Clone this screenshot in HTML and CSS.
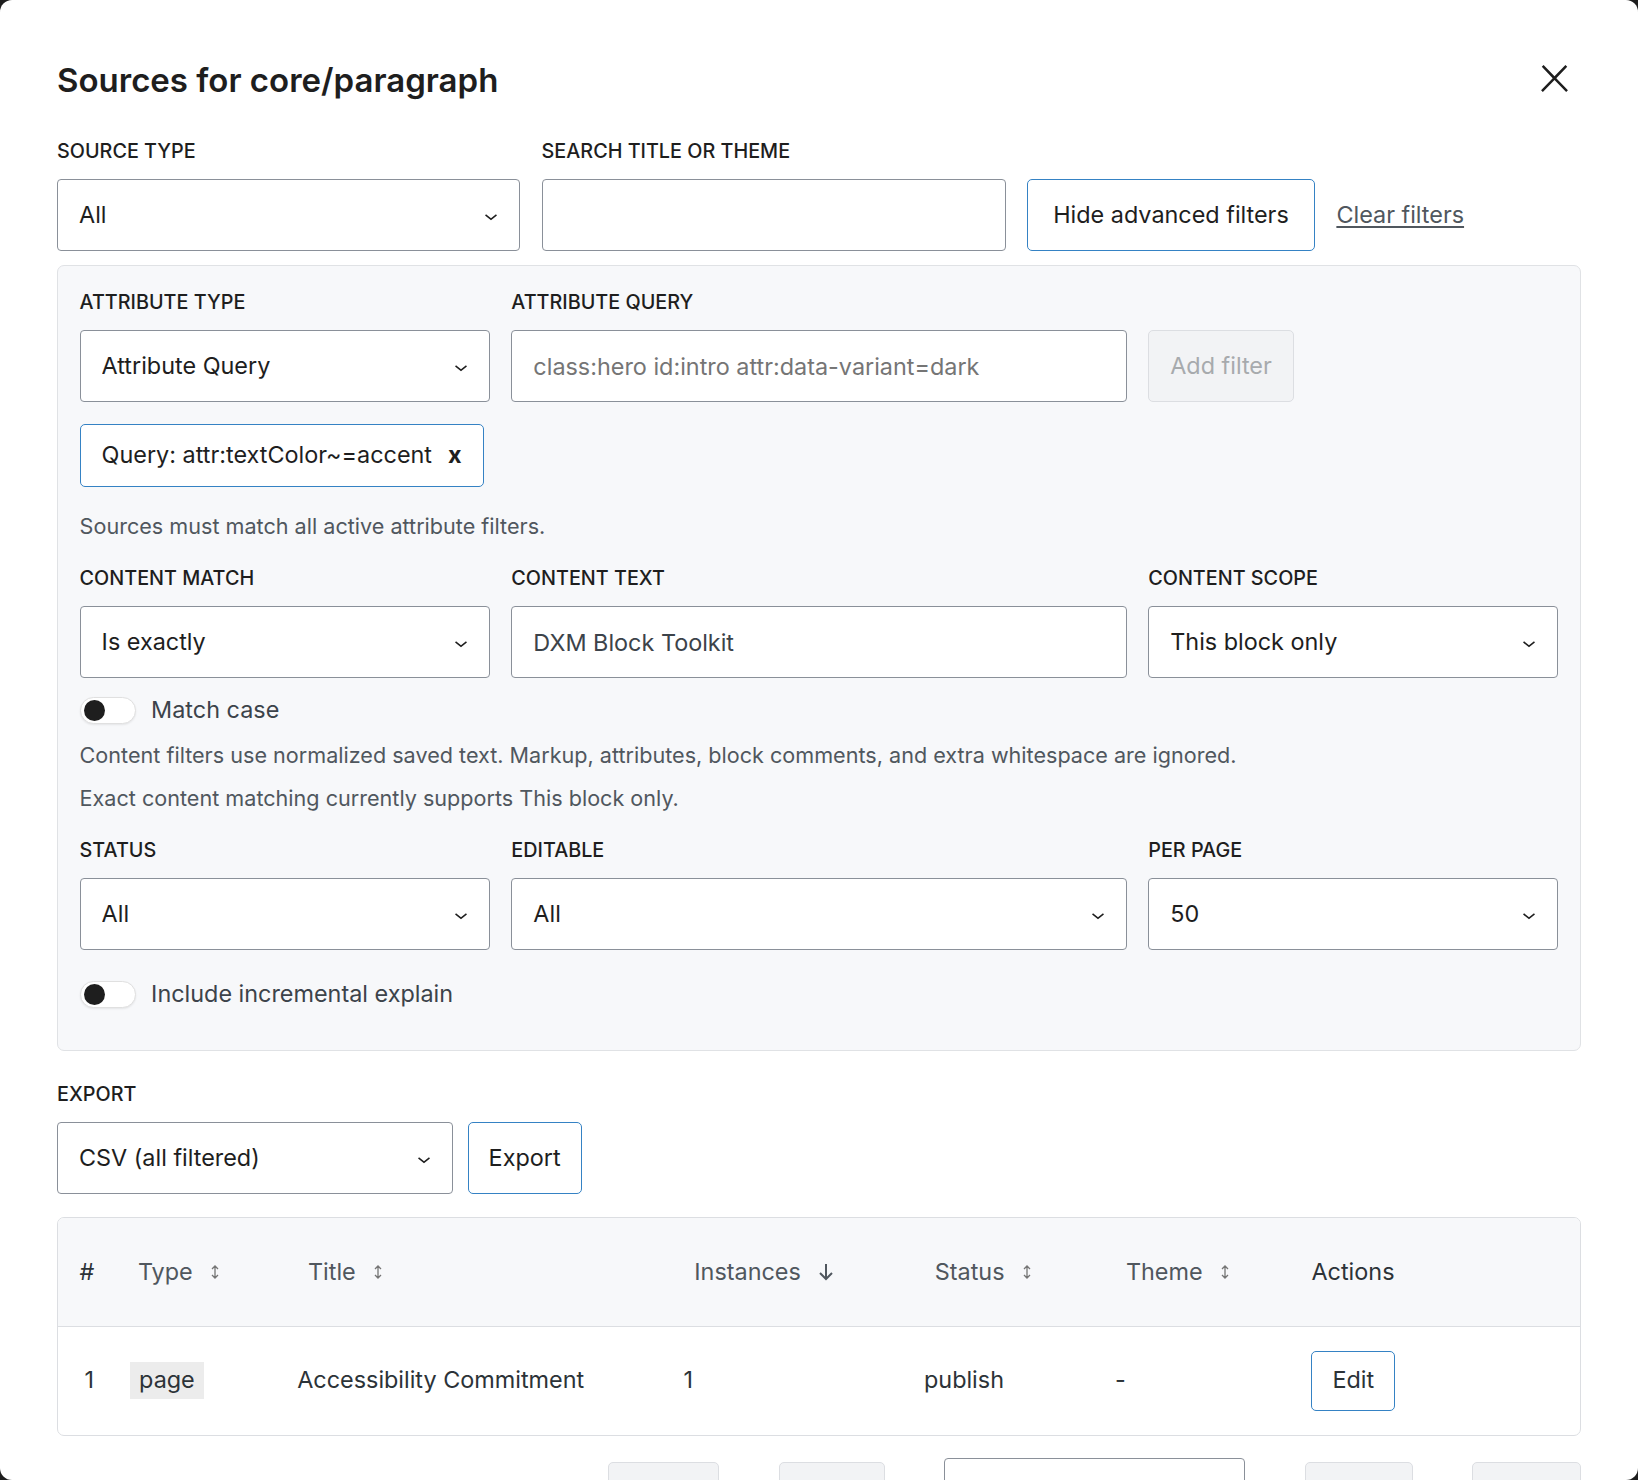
FILE: index.html
```html
<!DOCTYPE html>
<html lang="en">
<head>
    <meta charset="UTF-8">
    <meta name="viewport" content="width=device-width, initial-scale=1.0">
    <title>Sources for core/paragraph</title>
    <link rel="stylesheet" href="styles.css">
</head>
<body>
    <div class="modal">
        <div class="modal-header">
            <h1>Sources for core/paragraph</h1>
            <button class="close-button" aria-label="Close">
                <svg viewBox="0 0 24 24" width="43" height="43"><path d="M13 11.8l6.1-6.3-1-1-6.1 6.2-6.1-6.2-1 1 6.1 6.3-6.5 6.7 1 1 6.5-6.6 6.5 6.6 1-1z"/></svg>
            </button>
        </div>

        <div class="filter-row">
            <div class="field source-field">
                <label class="field-label">Source type</label>
                <div class="select-wrap">
                    <select class="control"><option>All</option></select>
                    <svg class="chevron" viewBox="0 0 24 24"><path d="M17.5 11.6L12 16l-5.5-4.4.9-1.2L12 14l4.6-3.6z"/></svg>
                </div>
            </div>
            <div class="field search-field">
                <label class="field-label">Search title or theme</label>
                <input type="text" class="control">
            </div>
            <button class="button button-toggle">Hide advanced filters</button>
            <a href="#" class="link">Clear filters</a>
        </div>

        <div class="advanced">
            <div class="grid3">
                <div class="field">
                    <label class="field-label">Attribute type</label>
                    <div class="select-wrap">
                        <select class="control"><option>Attribute Query</option></select>
                        <svg class="chevron" viewBox="0 0 24 24"><path d="M17.5 11.6L12 16l-5.5-4.4.9-1.2L12 14l4.6-3.6z"/></svg>
                    </div>
                </div>
                <div class="field">
                    <label class="field-label">Attribute query</label>
                    <input type="text" class="control" placeholder="class:hero id:intro attr:data-variant=dark">
                </div>
                <div class="field field-end">
                    <button class="button button-disabled">Add filter</button>
                </div>
            </div>

            <div class="chips">
                <span class="chip">Query: attr:textColor~=accent <b class="chip-remove">x</b></span>
            </div>
            <p class="hint hint-first">Sources must match all active attribute filters.</p>

            <div class="grid3 content-row">
                <div class="field">
                    <label class="field-label">Content match</label>
                    <div class="select-wrap">
                        <select class="control"><option>Is exactly</option></select>
                        <svg class="chevron" viewBox="0 0 24 24"><path d="M17.5 11.6L12 16l-5.5-4.4.9-1.2L12 14l4.6-3.6z"/></svg>
                    </div>
                </div>
                <div class="field">
                    <label class="field-label">Content text</label>
                    <input type="text" class="control control-value" value="DXM Block Toolkit">
                </div>
                <div class="field">
                    <label class="field-label">Content scope</label>
                    <div class="select-wrap">
                        <select class="control"><option>This block only</option></select>
                        <svg class="chevron" viewBox="0 0 24 24"><path d="M17.5 11.6L12 16l-5.5-4.4.9-1.2L12 14l4.6-3.6z"/></svg>
                    </div>
                </div>
            </div>

            <label class="toggle-row toggle-case">
                <span class="toggle"><span class="knob"></span></span>
                Match case
            </label>
            <p class="hint hint-content">Content filters use normalized saved text. Markup, attributes, block comments, and extra whitespace are ignored.</p>
            <p class="hint hint-exact">Exact content matching currently supports This block only.</p>

            <div class="grid3 status-row">
                <div class="field">
                    <label class="field-label">Status</label>
                    <div class="select-wrap">
                        <select class="control"><option>All</option></select>
                        <svg class="chevron" viewBox="0 0 24 24"><path d="M17.5 11.6L12 16l-5.5-4.4.9-1.2L12 14l4.6-3.6z"/></svg>
                    </div>
                </div>
                <div class="field">
                    <label class="field-label">Editable</label>
                    <div class="select-wrap">
                        <select class="control"><option>All</option></select>
                        <svg class="chevron" viewBox="0 0 24 24"><path d="M17.5 11.6L12 16l-5.5-4.4.9-1.2L12 14l4.6-3.6z"/></svg>
                    </div>
                </div>
                <div class="field">
                    <label class="field-label">Per page</label>
                    <div class="select-wrap">
                        <select class="control"><option>50</option></select>
                        <svg class="chevron" viewBox="0 0 24 24"><path d="M17.5 11.6L12 16l-5.5-4.4.9-1.2L12 14l4.6-3.6z"/></svg>
                    </div>
                </div>
            </div>

            <label class="toggle-row toggle-explain">
                <span class="toggle"><span class="knob"></span></span>
                Include incremental explain
            </label>
        </div>

        <div class="export">
            <label class="field-label">Export</label>
            <div class="export-row">
                <div class="select-wrap export-select">
                    <select class="control"><option>CSV (all filtered)</option></select>
                    <svg class="chevron" viewBox="0 0 24 24"><path d="M17.5 11.6L12 16l-5.5-4.4.9-1.2L12 14l4.6-3.6z"/></svg>
                </div>
                <button class="button button-export">Export</button>
            </div>
        </div>

        <div class="table-wrap">
            <table class="results">
                <thead>
                    <tr>
                        <th class="col-num">#</th>
                        <th class="col-type"><span class="sort sort-type">Type <svg class="sort-icon" viewBox="0 0 10 14"><path d="M5 1v12M2 4l3-3 3 3M2 10l3 3 3-3"/></svg></span></th>
                        <th class="col-title"><span class="sort">Title <svg class="sort-icon" viewBox="0 0 10 14"><path d="M5 1v12M2 4l3-3 3 3M2 10l3 3 3-3"/></svg></span></th>
                        <th class="col-instances"><span class="sort">Instances <svg class="sort-down" viewBox="0 0 16 18"><path d="M8 1v15M2 10l6 6 6-6"/></svg></span></th>
                        <th class="col-status"><span class="sort">Status <svg class="sort-icon" viewBox="0 0 10 14"><path d="M5 1v12M2 4l3-3 3 3M2 10l3 3 3-3"/></svg></span></th>
                        <th class="col-theme"><span class="sort">Theme <svg class="sort-icon" viewBox="0 0 10 14"><path d="M5 1v12M2 4l3-3 3 3M2 10l3 3 3-3"/></svg></span></th>
                        <th class="col-actions">Actions</th>
                    </tr>
                </thead>
                <tbody>
                    <tr>
                        <td class="cell-num">1</td>
                        <td><code class="badge">page</code></td>
                        <td>Accessibility Commitment</td>
                        <td>1</td>
                        <td>publish</td>
                        <td>-</td>
                        <td><button class="button button-row">Edit</button></td>
                    </tr>
                </tbody>
            </table>
        </div>

        <div class="pager">
            <button class="button button-disabled pager-first" aria-label="First page"></button>
            <button class="button button-disabled pager-prev" aria-label="Previous page"></button>
            <input type="text" class="control pager-input" aria-label="Current page">
            <button class="button button-disabled pager-next" aria-label="Next page"></button>
            <button class="button button-disabled pager-last" aria-label="Last page"></button>
        </div>
    </div>
</body>
</html>
```

FILE: styles.css
```css
* {
    box-sizing: border-box;
}
html, body {
    margin: 0;
}
body {
    background: #1e1e1e;
    font-family: Inter, "Noto Sans", sans-serif;
    font-size: 23.4px;
    line-height: 32.8px;
    color: #1e1e1e;
}
.modal {
    height: 1480px;
    background: #fff;
    border-radius: 12px;
    overflow: hidden;
    padding: 0 57px;
}
.modal-header {
    display: flex;
    align-items: center;
    justify-content: space-between;
    height: 54px;
    margin-top: 53px;
    margin-bottom: 30px;
}
.modal-header h1 {
    margin: 0;
    font-size: 33px;
    font-weight: 600;
    line-height: 40px;
    color: #1e1e1e;
}
.close-button {
    width: 54px;
    height: 54px;
    margin-top: -3px;
    display: flex;
    align-items: center;
    justify-content: center;
    background: none;
    border: none;
    padding: 0;
    cursor: pointer;
}
.close-button svg {
    fill: #1e1e1e;
}

/* form controls */
.field-label {
    display: block;
    font-size: 19.8px;
    font-weight: 500;
    line-height: 27.7px;
    text-transform: uppercase;
    padding-top: 1px;
    margin-bottom: 13.4px;
    color: #1e1e1e;
}
.control {
    display: block;
    width: 100%;
    height: 72px;
    margin: 0;
    padding: 0 21px;
    border: 1px solid #8a9099;
    border-radius: 4px;
    background: #fff;
    font: inherit;
    color: #1e1e1e;
    appearance: none;
    -webkit-appearance: none;
}
.control::placeholder {
    color: #757575;
}
.control-value {
    color: #3c434a;
}
.select-wrap {
    position: relative;
}
.chevron {
    position: absolute;
    right: 16px;
    top: 50%;
    width: 26px;
    height: 26px;
    margin-top: -12px;
    fill: #1e1e1e;
    pointer-events: none;
}
.button {
    height: 72px;
    padding: 0 23px;
    border: 1px solid #3582c4;
    border-radius: 5px;
    background: #fff;
    font: inherit;
    color: #1e1e1e;
    cursor: pointer;
    white-space: nowrap;
}
.button-toggle {
    padding: 0 25px;
}
.button-export {
    padding: 0 20px;
}
.button-disabled {
    background: #f2f3f5;
    border-color: #dcdee2;
    color: #a7aaad;
    padding: 0 21px;
}
.link {
    display: flex;
    align-items: center;
    height: 72px;
    color: #50575e;
    text-decoration: underline;
    text-underline-offset: 3px;
}

/* top filters */
.filter-row {
    display: flex;
    align-items: flex-end;
    gap: 21.6px;
}
.source-field {
    width: 463px;
}
.search-field {
    width: 464px;
}

/* advanced panel */
.advanced {
    margin-top: 14.4px;
    background: #f7f8fa;
    border: 1px solid #e0e2e5;
    border-radius: 7px;
    padding: 21.6px 21.6px 39.6px;
}
.grid3 {
    display: grid;
    grid-template-columns: 2fr 3fr 2fr;
    gap: 21.6px;
}
.field-end {
    display: flex;
    align-items: flex-end;
}
.chips {
    margin-top: 21.6px;
}
.chip {
    display: inline-flex;
    align-items: center;
    gap: 16px;
    height: 63px;
    padding: 0 21px;
    border: 1px solid #3582c4;
    border-radius: 5px;
    background: #fff;
    color: #1e1e1e;
}
.chip-remove {
    font-weight: 700;
}
.hint {
    margin: 0;
    font-size: 21.6px;
    color: #50575e;
}
.hint-first {
    margin-top: 22.8px;
}
.content-row {
    margin-top: 21.8px;
}
.toggle-row {
    display: flex;
    align-items: center;
    gap: 15.5px;
    color: #3c434a;
}
.toggle-case {
    margin-top: 15.7px;
}
.toggle {
    display: flex;
    align-items: center;
    width: 56px;
    height: 27px;
    padding: 0 3px;
    border: 1px solid #e0e0e0;
    border-radius: 14px;
    background: #fff;
    box-shadow: 0 1px 2px rgba(0, 0, 0, 0.08);
}
.knob {
    width: 21px;
    height: 21px;
    border-radius: 50%;
    background: #1e1e1e;
}
.hint-content {
    margin-top: 12.2px;
}
.hint-exact {
    margin-top: 10.2px;
}
.status-row {
    margin-top: 21.7px;
}
.toggle-explain {
    margin-top: 27.4px;
}

/* export */
.export {
    margin-top: 28.8px;
}
.export-row {
    display: flex;
    gap: 14.6px;
}
.export-select {
    width: 396px;
}

/* results table */
.table-wrap {
    margin-top: 23.1px;
    border: 1px solid #dcdee2;
    border-radius: 7px;
    overflow: hidden;
}
.results {
    width: 100%;
    border-collapse: collapse;
    table-layout: fixed;
}
.results th,
.results td {
    height: 108.2px;
    padding: 0 0 0 21.6px;
    text-align: left;
    vertical-align: middle;
    white-space: nowrap;
}
.results th {
    background: #f7f8fa;
    border-bottom: 1px solid #dcdee2;
    font-weight: 400;
    color: #2c3338;
}
.results td {
    color: #2c3338;
}
.results .cell-num {
    padding-left: 26.6px;
}
.col-num { width: 50.5px; }
.col-type { width: 167.1px; }
.col-title { width: 386.3px; }
.col-instances { width: 240.5px; }
.col-status { width: 191.1px; }
.col-theme { width: 196.4px; }
.col-actions { width: 290.1px; }
.sort {
    display: inline-flex;
    align-items: center;
    gap: 17px;
    padding-left: 10.8px;
    color: #50575e;
}
.sort-type {
    padding-left: 7.8px;
}
.sort-icon {
    width: 10px;
    height: 14px;
    fill: none;
    stroke: #757575;
    stroke-width: 1.3;
}
.sort-down {
    width: 16px;
    height: 18px;
    fill: none;
    stroke: #50575e;
    stroke-width: 2;
}
.badge {
    display: inline-block;
    padding: 2px 9px;
    background: #ececec;
    font-family: inherit;
    font-size: inherit;
    color: #2c3338;
}
.button-row {
    height: 60px;
    padding: 0 20px;
    color: #2c3338;
}

/* pagination */
.pager {
    display: flex;
    justify-content: flex-end;
    align-items: center;
    gap: 59.4px;
    margin-top: 22.5px;
}
.pager .button {
    height: 64.8px;
}
.pager-first { width: 111px; }
.pager-prev { width: 106px; }
.pager-next { width: 108px; }
.pager-last { width: 109px; }
.pager-input {
    width: 301px;
}
```
